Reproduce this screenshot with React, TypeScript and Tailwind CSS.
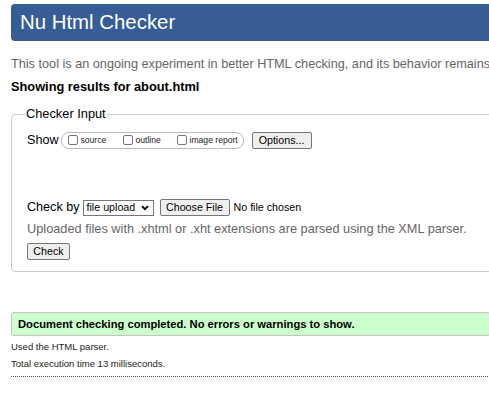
export default function App() {
  const box = "inline-block w-[10px] h-[10px] border border-[#767676] rounded-[2px] bg-white shrink-0";
  const btn = "border border-[#767676] bg-[#efefef] rounded-[2px] text-[10.7px] leading-none flex items-center justify-center whitespace-nowrap shrink-0";
  return (
    <div className="w-[489px] h-[410px] overflow-hidden bg-white text-black font-['Liberation_Sans',Arial,sans-serif]">
      <div className="w-[800px] pl-[11px] pt-[4px]">
        <h1 className="h-[37px] bg-[#365d95] rounded-l-[4px] text-white text-[20.4px] pl-[9px] flex items-center leading-none font-normal">
          Nu Html Checker
        </h1>
        <p className="mt-[15px] text-[12.7px] leading-[16px] text-[#666] whitespace-nowrap">
          This tool is an ongoing experiment in better HTML checking, and its behavior remains in flux.
        </p>
        <p className="mt-[7px] text-[12.8px] leading-[16px] font-bold">Showing results for about.html</p>
        <fieldset className="mt-[11px] border border-[#ccc] rounded-[4px] pl-[15px] pb-[11px]">
          <legend className="ml-[-1px] text-[12.8px] leading-[16px] pr-[1px]">Checker Input</legend>
          <div className="mt-[10px] h-[17px] flex items-center text-[12.6px] whitespace-nowrap">
            <span>Show</span>
            <div className="ml-[2px] w-[183px] h-[17px] border border-[#bbb] rounded-[8px] flex items-center pl-[6px] text-[8.6px] text-[#222] shrink-0">
              <span className="w-[55px] flex items-center">
                <span className={box}></span>
                <span className="ml-[3px]">source</span>
              </span>
              <span className="w-[54px] flex items-center">
                <span className={box}></span>
                <span className="ml-[3px]">outline</span>
              </span>
              <span className="flex items-center">
                <span className={box}></span>
                <span className="ml-[3px]">image report</span>
              </span>
            </div>
            <button className={"ml-[8px] w-[60px] h-[17px] " + btn}>Options...</button>
          </div>
          <div className="mt-[50px] h-[17px] flex items-center text-[12.6px] whitespace-nowrap">
            <span>Check by</span>
            <div className="ml-[3px] w-[71px] h-[16px] border border-[#767676] bg-white flex items-center pl-[3px] pr-[4px] text-[10.7px] leading-none shrink-0">
              <span className="flex-1">file upload</span>
              <svg width="8" height="6" viewBox="0 0 8 6" className="shrink-0">
                <polyline points="1,1.2 4,4.2 7,1.2" fill="none" stroke="#000" strokeWidth="1.8" />
              </svg>
            </div>
            <button className={"ml-[6px] w-[70px] h-[17px] " + btn}>Choose File</button>
            <span className="ml-[4px] text-[10.7px]">No file chosen</span>
          </div>
          <p className="mt-[5px] text-[12.75px] leading-[16px] text-[#666] whitespace-nowrap">
            Uploaded files with .xhtml or .xht extensions are parsed using the XML parser.
          </p>
          <button className={"mt-[6px] w-[43px] h-[17px] " + btn}>Check</button>
        </fieldset>
        <div className="mt-[40px] h-[24px] border border-[#c4c4c4] bg-[#ccffcc] rounded-[3px] pl-[6px] flex items-center font-bold text-[11.2px] whitespace-nowrap">
          Document checking completed. No errors or warnings to show.
        </div>
        <p className="mt-[5px] text-[9.5px] leading-[12px] text-[#222]">Used the HTML parser.</p>
        <p className="mt-[5px] text-[9.5px] leading-[12px] text-[#222]">Total execution time 13 milliseconds.</p>
        <div className="mt-[6px] border-t border-dotted border-[#555]"></div>
      </div>
    </div>
  );
}
